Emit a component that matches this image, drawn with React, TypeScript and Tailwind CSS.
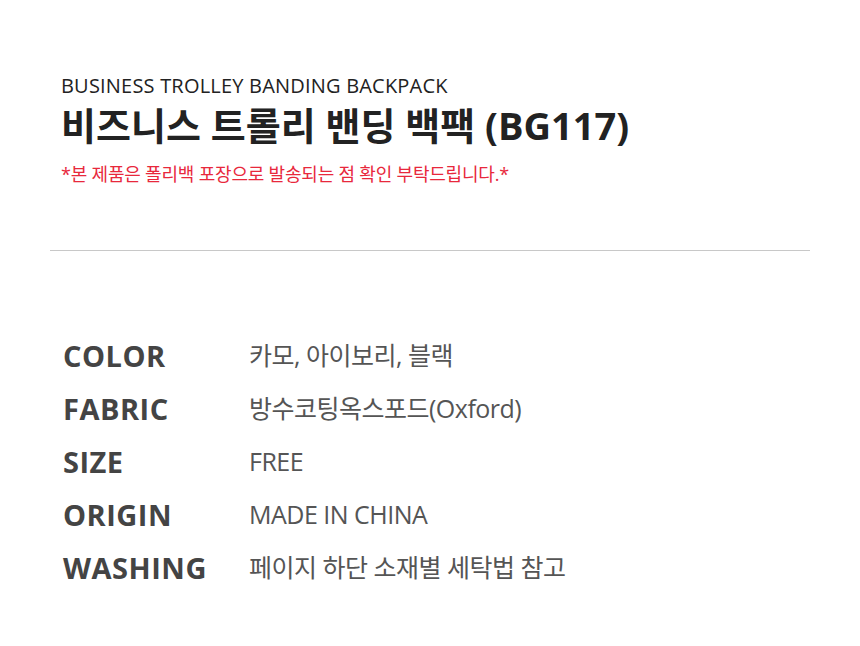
const SPECS = [
  { label: "COLOR", value: "카모, 아이보리, 블랙" },
  { label: "FABRIC", value: "방수코팅옥스포드(Oxford)" },
  { label: "SIZE", value: "FREE" },
  { label: "ORIGIN", value: "MADE IN CHINA" },
  { label: "WASHING", value: "페이지 하단 소재별 세탁법 참고" },
];

export default function App() {
  return (
    <div className="h-[646px] w-[860px] bg-white font-['Open_Sans','Noto_Sans_CJK_KR',sans-serif]">
      <div className="px-[61px] pt-[72px]">
        <p className="text-[20px] leading-[28px] tracking-[0.2px] text-[#222]">BUSINESS TROLLEY BANDING BACKPACK</p>
        <h1 className="mt-[2px] text-[38px] font-bold leading-[46px] text-[#222]">
          비즈니스 트롤리 밴딩 백팩 (BG117)
        </h1>
        <p className="mt-[14px] text-[18px] leading-[24px] tracking-[-0.2px] text-[#e8283c]">
          *본 제품은 폴리백 포장으로 발송되는 점 확인 부탁드립니다.*
        </p>
      </div>
      <div className="mx-[50px] mt-[64px] h-px bg-[#c8c8c8]" />
      <div className="mt-[85px] flex flex-col gap-[14px] px-[63px]">
        {SPECS.map((s) => (
          <div key={s.label} className="flex items-center">
            <span className="w-[186px] text-[29px] font-bold leading-[39px] tracking-[0.5px] text-[#444]">{s.label}</span>
            <span className="text-[25px] leading-[39px] tracking-[-0.5px] text-[#555]">{s.value}</span>
          </div>
        ))}
      </div>
    </div>
  );
}
